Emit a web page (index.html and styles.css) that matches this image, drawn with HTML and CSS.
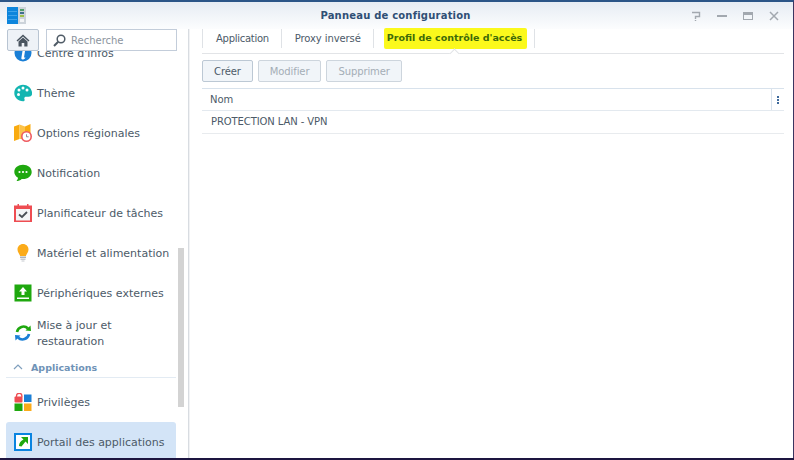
FILE: index.html
```html
<!DOCTYPE html>
<html lang="fr">
<head>
  <meta charset="UTF-8" />
  <title>Panneau de configuration</title>
  <link rel="stylesheet" href="styles.css">
</head>
<body>
  <div class="window">
    <div class="titlebar">
      <svg class="app-icon" width="19" height="17" viewBox="0 0 19 17">
        <rect x="0" y="0" width="11" height="17" fill="#0d85dc"/>
        <rect x="1" y="4" width="9" height="1" fill="#3fa3ea"/>
        <rect x="1" y="8" width="9" height="1" fill="#3fa3ea"/>
        <rect x="1" y="12" width="9" height="1" fill="#3fa3ea"/>
        <rect x="11" y="0" width="8" height="17" fill="#ccd3da"/>
        <rect x="13" y="2" width="4" height="2" fill="#4f9e6a"/>
        <rect x="13" y="5" width="4" height="2" fill="#3f6f8f"/>
        <rect x="13" y="8" width="4" height="2" fill="#9cc04a"/>
        <rect x="13" y="12" width="4" height="3" fill="#f2f4f6"/>
      </svg>
      <div class="title">Panneau de configuration</div>
      <div class="win-buttons">
        <svg width="12" height="12" viewBox="0 0 12 12"><path d="M2 2.500H9.500V6.500H5.500V9M5.500 10V11" fill="none" stroke="#a2a8af" stroke-width="1.400"/></svg>
        <svg width="12" height="12" viewBox="0 0 12 12"><rect x="1" y="5" width="10" height="2" fill="#a2a8af"/></svg>
        <svg width="12" height="12" viewBox="0 0 12 12"><rect x="1.500" y="2.500" width="9" height="7" fill="none" stroke="#a2a8af"/><rect x="1" y="2" width="10" height="3" fill="#a2a8af"/></svg>
        <svg width="12" height="12" viewBox="0 0 12 12"><path d="M2 2L10 10M10 2L2 10" stroke="#a2a8af" stroke-width="1.500"/></svg>
      </div>
    </div>

    <div class="main">
      <div class="sidebar">
        <div class="search-row">
          <div class="home-btn">
            <svg width="14" height="13" viewBox="0 0 14 13"><path d="M7 0.500L0.500 6.500L1.500 7.500L7 2.600L12.500 7.500L13.500 6.500Z" fill="#4a5560"/><path d="M2.500 7.500L7 3.600L11.500 7.500V12.500H8.300V9H5.700V12.500H2.500Z" fill="#4a5560"/></svg>
          </div>
          <div class="search-box">
            <svg width="13" height="13" viewBox="0 0 13 13"><circle cx="8" cy="5" r="3.800" fill="none" stroke="#4f5b66" stroke-width="1.500"/><path d="M5.200 7.800L1 12" stroke="#4f5b66" stroke-width="2"/></svg>
            <span>Recherche</span>
          </div>
        </div>
        <div class="nav">
          <div class="nav-list">
            <div class="nav-item">
              <svg width="18" height="18" viewBox="0 0 18 18"><circle cx="9" cy="9" r="8.500" fill="#1a7fd6"/><path d="M8.500 7H11L10 13.500H11.500C11 15 9.500 15.500 8.500 15.500C7.500 15.500 7.200 14.800 7.400 13.800Z" fill="#fff"/></svg>
              <span>Centre d'infos</span>
            </div>
            <div class="nav-item">
              <svg width="18" height="18" viewBox="0 0 18 18"><path d="M9 .800C4 .800.300 4.400.300 9S4 17.200 9 17.200c1.600 0 2-1 1.500-2-.600-1.200.100-2.400 1.600-2.400h2.600c2 0 3.500-1.300 3.500-3.600C17.700 4.300 14 .800 9 .800Z" fill="#13b5b1"/><circle cx="5" cy="6" r="1.500" fill="#fff"/><circle cx="9" cy="4" r="1.500" fill="#fff"/><circle cx="13" cy="6" r="1.500" fill="#fff"/><circle cx="4.500" cy="10.500" r="1.500" fill="#fff"/></svg>
              <span>Thème</span>
            </div>
            <div class="nav-item">
              <svg width="18" height="18" viewBox="0 0 18 18"><path d="M0 2.500L5.500 .500V15L0 17Z" fill="#f9ab10"/><path d="M5.500 .500L11 2.500V15L5.500 15Z" fill="#fcc34a"/><path d="M11 2.500L16.500 0V10L11 15Z" fill="#f9ab10"/><circle cx="12.500" cy="12.500" r="4.700" fill="#fff" stroke="#ee5a5f" stroke-width="1.600"/><path d="M12.500 10.300V12.800H14.600" fill="none" stroke="#8a8f96"/></svg>
              <span>Options régionales</span>
            </div>
            <div class="nav-item">
              <svg width="18" height="18" viewBox="0 0 18 18"><path d="M9 .800C4.100.800.300 3.900.300 7.900c0 2.500 1.500 4.500 3.700 5.800-.100 1.300-.800 2.500-1.600 3.400 2 0 3.900-.900 5.300-2.200.500.100 1 .100 1.300.100 4.900 0 8.700-3.100 8.700-7.100S13.900.800 9 .800Z" fill="#1fa80f"/><circle cx="5.500" cy="8" r="1.100" fill="#fff"/><circle cx="9" cy="8" r="1.100" fill="#fff"/><circle cx="12.500" cy="8" r="1.100" fill="#fff"/></svg>
              <span>Notification</span>
            </div>
            <div class="nav-item">
              <svg width="18" height="18" viewBox="0 0 18 18"><rect x="1" y="2.500" width="16" height="15" fill="#f4f5f6" stroke="#ee4d52" stroke-width="2"/><rect x="1" y="2" width="16" height="3" fill="#ee4d52"/><rect x="3.500" y="0" width="1.500" height="3" fill="#ee4d52"/><rect x="13" y="0" width="1.500" height="3" fill="#ee4d52"/><path d="M5 10.500L8 13L13 8" fill="none" stroke="#4a4f55" stroke-width="1.800"/></svg>
              <span>Planificateur de tâches</span>
            </div>
            <div class="nav-item">
              <svg width="18" height="18" viewBox="0 0 18 18"><path d="M9 0C5.800 0 3.500 2.400 3.500 5.500c0 2.600 1.700 3.700 2.600 6.500h5.800c.900-2.800 2.600-3.900 2.600-6.500C14.500 2.400 12.200 0 9 0Z" fill="#fbab1a"/><rect x="6" y="12.500" width="6" height="1.500" fill="#aeb4ba"/><rect x="6.500" y="14.500" width="5" height="1.500" fill="#c5cad0"/><rect x="7.500" y="16.500" width="3" height="1" fill="#c5cad0"/></svg>
              <span>Matériel et alimentation</span>
            </div>
            <div class="nav-item">
              <svg width="18" height="18" viewBox="0 0 18 18"><rect x="0.500" y="0.500" width="17" height="17" fill="#1fa80f"/><path d="M9 3L13 7.500H10.500V11H7.500V7.500H5Z" fill="#fff"/><rect x="3" y="13.500" width="12" height="1.500" fill="#fff"/></svg>
              <span>Périphériques externes</span>
            </div>
            <div class="nav-item tall">
              <svg width="18" height="18" viewBox="0 0 18 18"><path d="M3 8A6.500 6.500 0 0 1 14 4.500" fill="none" stroke="#1fa80f" stroke-width="2.600"/><path d="M11.500 6.500L17 7L16.500 1.500Z" fill="#1fa80f"/><path d="M15 10A6.500 6.500 0 0 1 4 13.500" fill="none" stroke="#1a7fd6" stroke-width="2.600"/><path d="M6.500 11.500L1 11L1.500 16.500Z" fill="#1a7fd6"/></svg>
              <span>Mise à jour et<br>restauration</span>
            </div>
            <div class="nav-group">
              <svg width="10" height="6" viewBox="0 0 10 6"><path d="M1 5L5 1L9 5" fill="none" stroke="#7f9fbd" stroke-width="1.200"/></svg>
              <span>Applications</span>
            </div>
            <div class="nav-item">
              <svg width="18" height="18" viewBox="0 0 18 18"><path d="M2.500 4V3a2.700 2.700 0 0 1 5.400 0V4" fill="none" stroke="#ee4d52" stroke-width="1.300"/><rect x="0.500" y="3.500" width="8" height="6" rx="1" fill="#ee4d52"/><rect x="10" y="1.500" width="7.500" height="7.500" fill="#1a7fd6"/><rect x="0.500" y="10.500" width="8" height="7.500" fill="#1fa80f"/><rect x="10" y="10.500" width="7.500" height="7.500" fill="#fbab1a"/></svg>
              <span>Privilèges</span>
            </div>
            <div class="nav-item selected">
              <svg width="18" height="18" viewBox="0 0 18 18"><rect x="1" y="1" width="16" height="16" fill="#fff" stroke="#0a84e0" stroke-width="2"/><path d="M7 4H14V11L11.500 8.500L7.500 13.500L5 13C5 10 6.500 8 9.500 6.500Z" fill="#1fa80f"/></svg>
              <span>Portail des applications</span>
            </div>
          </div>
        </div>
        <div class="scrollbar"></div>
      </div>

      <div class="content">
        <div class="tabs">
          <div class="tab">Application</div>
          <div class="tab">Proxy inversé</div>
          <div class="tab active"><span class="hl">Profil de contrôle d'accès</span></div>
          <div class="tab-arrow"></div>
        </div>
        <div class="toolbar">
          <button class="btn">Créer</button>
          <button class="btn" disabled>Modifier</button>
          <button class="btn" disabled>Supprimer</button>
        </div>
        <div class="grid">
          <div class="grid-head">
            <div class="grid-col">Nom</div>
            <div class="grid-menu"><i></i><i></i><i></i></div>
          </div>
          <div class="grid-row">PROTECTION LAN - VPN</div>
        </div>
      </div>
    </div>
  </div>
  <div class="desktop-strip"></div>
</body>
</html>
```

FILE: styles.css
```css
html, body {
  margin: 0;
  height: 460px;
  overflow: hidden;
}
body {
  font-family: "DejaVu Sans", Verdana, sans-serif;
  font-size: 11px;
  color: #4c5a68;
  background: #fff;
}
.window {
  height: 458px;
  border-top: 2px solid #2b5587;
  border-right: 1px solid #3a3560;
  box-sizing: border-box;
  display: flex;
  flex-direction: column;
  background: #fff;
}
.desktop-strip {
  height: 2px;
  background: #1d1540;
}
.titlebar {
  height: 27px;
  flex: none;
  display: flex;
  align-items: center;
  padding: 0 13px 0 7px;
  position: relative;
  background: linear-gradient(#e6ecf3, #fcfdfe);
}
.title {
  position: absolute;
  left: 0;
  right: 2px;
  text-align: center;
  font-size: 10px;
  font-weight: bold;
  letter-spacing: 0.2px;
  color: #2f4f75;
}
.win-buttons {
  margin-left: auto;
  display: flex;
  gap: 14px;
  align-items: center;
}
.main {
  flex: 1;
  display: flex;
  min-height: 0;
}
.sidebar {
  width: 188px;
  flex: none;
  border-right: 1px solid #d8dce1;
  box-shadow: 1px 0 0 #f1f2f4;
  position: relative;
  display: flex;
  flex-direction: column;
}
.search-row {
  height: 22px;
  flex: none;
  display: flex;
  gap: 7px;
  padding: 0 11px 0 7px;
}
.home-btn {
  width: 32px;
  height: 22px;
  box-sizing: border-box;
  border: 1px solid #b8c4d2;
  border-radius: 2px;
  background: #eef2f7;
  display: flex;
  align-items: center;
  justify-content: center;
}
.search-box {
  flex: 1;
  height: 22px;
  box-sizing: border-box;
  border: 1px solid #c3cdda;
  display: flex;
  align-items: center;
  gap: 5px;
  padding-left: 6px;
  font-size: 10px;
  color: #8b949e;
}
.nav {
  flex: 1;
  min-height: 0;
  overflow: hidden;
}
.nav-list {
  width: 170px;
  margin-left: 6px;
  margin-top: -18px;
}
.nav-item {
  height: 40px;
  display: flex;
  align-items: center;
  gap: 5px;
  padding-left: 8px;
  border-radius: 3px;
}
.nav-item.tall {
  line-height: 16px;
}
.nav-item.tall span {
  padding-top: 1px;
}
.nav-item svg {
  flex: none;
}
.nav-item.selected {
  background: #d3e4f7;
}
.nav-group {
  height: 20px;
  margin-bottom: 4px;
  padding: 4px 0 0 7px;
  display: flex;
  align-items: center;
  gap: 8px;
  font-size: 9.5px;
  font-weight: bold;
  color: #6f93b7;
  border-bottom: 1px solid #e3ebf3;
}
.scrollbar {
  position: absolute;
  left: 178px;
  top: 219px;
  width: 6px;
  height: 159px;
  background: #d3d3d3;
}
.content {
  flex: 1;
  padding: 0 9px 0 13px;
  min-width: 0;
  font-size: 10px;
  letter-spacing: -0.1px;
}
.tabs {
  height: 24px;
  display: flex;
  align-items: flex-start;
  border-bottom: 1px solid #e2e4e7;
  position: relative;
}
.tab {
  height: 19px;
  display: flex;
  align-items: center;
  padding: 0 12px 0 13px;
  border-left: 1px solid #dfe2e6;
}
.tab:first-child {
  letter-spacing: -0.28px;
}
.tab.active {
  border-right: 1px solid #dfe2e6;
  font-size: 9.5px;
  letter-spacing: 0;
  font-weight: bold;
  color: #3d6a08;
}
.hl {
  background: #fbf91c;
  padding: 4px 5px 6px 3px;
  margin: 0 -5px 0 -3px;
  border-radius: 2px;
}
.tab-arrow {
  position: absolute;
  left: 249px;
  bottom: -4px;
  width: 6px;
  height: 6px;
  background: #fff;
  border-left: 1px solid #e2e4e7;
  border-top: 1px solid #e2e4e7;
  transform: rotate(45deg);
}
.toolbar {
  display: flex;
  gap: 5px;
  padding-top: 6px;
}
.btn {
  height: 22px;
  padding: 0 11px;
  font: inherit;
  letter-spacing: inherit;
  color: #4c5a68;
  background: #f1f5f9;
  border: 1px solid #bcc8d4;
  border-radius: 2px;
}
.btn:disabled {
  color: #a4adb6;
  border-color: #cdd5dd;
}
.grid {
  margin-top: 6px;
}
.grid-head {
  height: 23px;
  box-sizing: border-box;
  display: flex;
  align-items: center;
  border-top: 1px solid #d8e2ec;
  border-bottom: 1px solid #e3e9ef;
}
.grid-col {
  flex: 1;
  padding: 1px 0 0 8px;
  border-right: 1px solid #d8e2ec;
  line-height: 20px;
}
.grid-menu {
  width: 12px;
  display: flex;
  flex-direction: column;
  align-items: center;
  gap: 1px;
}
.grid-menu i {
  width: 2px;
  height: 2px;
  background: #3f6a9c;
}
.grid-row {
  height: 22px;
  line-height: 21px;
  padding-left: 9px;
  border-bottom: 1px solid #e8ebee;
}
```
